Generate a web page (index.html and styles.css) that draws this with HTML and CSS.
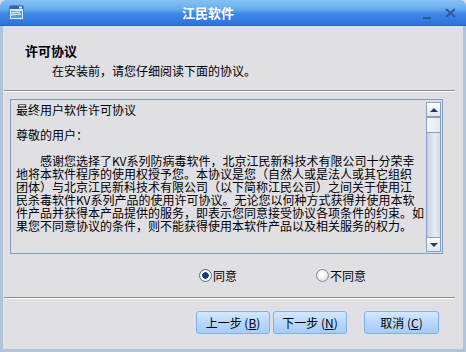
FILE: index.html
```html
<!DOCTYPE html>
<html lang="zh-CN">
<head>
    <meta charset="UTF-8">
    <title>江民软件</title>
    <link rel="stylesheet" href="styles.css">
</head>
<body>
    <div class="window">
        <div class="titlebar">
            <svg class="app-icon" width="17" height="17" viewBox="0 0 17 17">
                <rect x="1.5" y="1.5" width="14" height="14" rx="1" fill="#d8e6f6" stroke="#5a7fb0"/>
                <rect x="2" y="2" width="13" height="3" fill="#2f63b8"/>
                <rect x="3" y="7" width="11" height="7" fill="#5b9ae0"/>
                <path d="M3 9 L12 8 M3 11 L13 10" stroke="#ffffff" stroke-width="1"/>
                <rect x="11" y="2.5" width="3" height="2" fill="#e8f0fa"/>
            </svg>
            <span class="title">江民软件</span>
            <span class="ctrl min"></span>
            <span class="ctrl close">
                <svg width="11" height="10" viewBox="0 0 11 10">
                    <path d="M1 1 L10 9 M10 1 L1 9" stroke="#2f5a99" stroke-width="2"/>
                </svg>
            </span>
        </div>
        <div class="content">
            <div class="header">
                <div class="heading">许可协议</div>
                <div class="subheading">在安装前，请您仔细阅读下面的协议。</div>
            </div>
            <div class="sep"></div>
            <div class="license">
                <div class="license-text">
                    <p>最终用户软件许可协议</p>
                    <p>尊敬的用户：</p>
                    <p class="body-text">　　感谢您选择了KV系列防病毒软件，北京江民新科技术有限公司十分荣幸<br>地将本软件程序的使用权授予您。本协议是您（自然人或是法人或其它组织<br>团体）与北京江民新科技术有限公司（以下简称江民公司）之间关于使用江<br>民杀毒软件KV系列产品的使用许可协议。无论您以何种方式获得并使用本软<br>件产品并获得本产品提供的服务，即表示您同意接受协议各项条件的约束。如<br>果您不同意协议的条件，则不能获得使用本软件产品以及相关服务的权力。</p>
                </div>
                <div class="scrollbar">
                    <div class="sb-btn"><span class="arrow up"></span></div>
                    <div class="sb-thumb"></div>
                    <div class="sb-track"></div>
                    <div class="sb-btn"><span class="arrow down"></span></div>
                </div>
            </div>
            <div class="choices">
                <label class="choice"><span class="radio checked"></span>同意</label>
                <label class="choice"><span class="radio"></span>不同意</label>
            </div>
            <div class="sep"></div>
            <div class="actions">
                <button class="btn">上一步 (<u>B</u>)</button>
                <button class="btn">下一步 (<u>N</u>)</button>
                <button class="btn cancel">取消 (<u>C</u>)</button>
            </div>
        </div>
    </div>
</body>
</html>
```

FILE: styles.css
```css
* {
    box-sizing: border-box;
}

body {
    margin: 0;
    font-family: "Noto Sans CJK SC", "Liberation Sans", sans-serif;
    font-size: 12px;
    color: #000;
    background: #e0dfe3;
}

.window {
    width: 466px;
    height: 352px;
    display: flex;
    flex-direction: column;
    background: #e0dfe3;
}

.titlebar {
    height: 26px;
    display: flex;
    align-items: center;
    border-radius: 6px 6px 0 0;
    background: linear-gradient(#86c0f4 0%, #68aeef 35%, #3f88e6 55%, #2d71dc 100%);
    border-bottom: 1px solid #2460c8;
    padding: 0 10px 0 8px;
}

.app-icon {
    flex: none;
}

.title {
    flex: 1;
    text-align: center;
    color: #fff;
    font-weight: bold;
    font-size: 13px;
    padding-left: 2px;
    padding-right: 32px;
    line-height: 16px;
}

.ctrl {
    width: 12px;
    height: 12px;
    display: flex;
    align-items: center;
    justify-content: center;
}

.ctrl.min {
    margin-right: 11px;
    align-items: flex-end;
}

.ctrl.min::before {
    content: "";
    width: 8px;
    height: 2px;
    background: #2f5a99;
}

.content {
    flex: 1;
    display: flex;
    flex-direction: column;
    border: 3px solid #b2c2d8;
    border-top: none;
}

.header {
    height: 64px;
    padding-top: 16px;
}

.heading {
    margin-left: 22px;
    font-weight: bold;
    font-size: 13px;
    line-height: 17px;
}

.subheading {
    margin-left: 49px;
    margin-top: 4px;
    line-height: 16px;
}

.sep {
    margin: 0 8px 0 1px;
    border-top: 1px solid #8c8c8c;
    border-bottom: 1px solid #ffffff;
}

.license {
    margin: 7px 20px 0 7px;
    height: 155px;
    display: flex;
    border: 1px solid #7f9db9;
    background: #e0dfe3;
}

.license-text {
    flex: 1;
    padding: 3px 0 0 5px;
    line-height: 13px;
    white-space: nowrap;
    overflow: hidden;
}

.license-text p {
    margin: 0 0 12px;
}

.license-text .body-text {
    margin-top: 13px;
}

.scrollbar {
    width: 16px;
    display: flex;
    flex-direction: column;
    padding: 2px 1px 1px 0;
}

.sb-btn {
    height: 15px;
    border: 1px solid #8aa0c0;
    background: linear-gradient(#ffffff, #dfe6f0);
    display: flex;
    align-items: center;
    justify-content: center;
}

.sb-thumb {
    height: 16px;
    border: 1px solid #8aa0c0;
    background: linear-gradient(90deg, #f4f7fb, #e4eaf2);
}

.sb-track {
    flex: 1;
    border-left: 1px solid #8aa0c0;
    border-right: 1px solid #8aa0c0;
    background: linear-gradient(90deg, #c6d2e2, #e6ecf4 60%, #d2dcea);
}

.arrow {
    width: 0;
    height: 0;
    border-left: 4px solid transparent;
    border-right: 4px solid transparent;
}

.arrow.up {
    border-bottom: 4px solid #1c3a6a;
}

.arrow.down {
    border-top: 4px solid #1c3a6a;
}

.choices {
    height: 43px;
    display: flex;
    align-items: center;
    padding-left: 196px;
}

.choice {
    width: 117px;
    display: flex;
    align-items: center;
    line-height: 14px;
}

.radio {
    width: 13px;
    height: 13px;
    border-radius: 50%;
    border: 1px solid #7e8a9a;
    background: radial-gradient(circle at 45% 40%, #ffffff 20%, #dcdcdc 75%, #b8b8b8 100%);
    margin-right: 1px;
}

.radio.checked {
    border-color: #4f6f96;
    background: radial-gradient(circle, #1b3c72 0 3px, #ffffff 3.5px, #e6eaf0 100%);
}

.actions {
    display: flex;
    justify-content: flex-end;
    padding-right: 24px;
    margin-top: 12px;
}

.btn {
    width: 74px;
    height: 23px;
    margin-left: 3px;
    padding: 0;
    font-family: "Noto Sans CJK SC", "Liberation Sans", sans-serif;
    font-size: 12px;
    color: #000;
    border: 1px solid #7eb0ec;
    border-radius: 3px;
    background: linear-gradient(#d4e8fe, #b8d8fc 50%, #a8ccf8);
}

.btn.cancel {
    width: 75px;
    margin-left: 17px;
}
```
